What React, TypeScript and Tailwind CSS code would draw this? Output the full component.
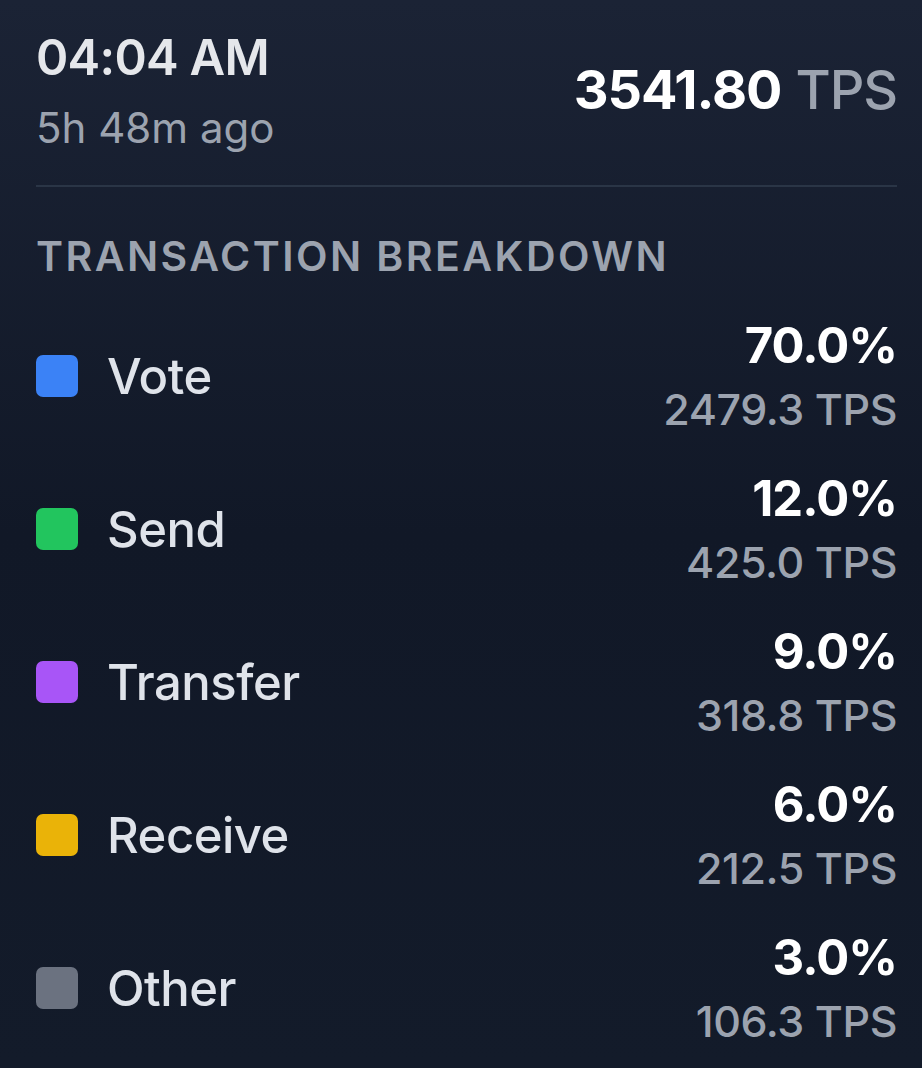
import React from "react";

const rows = [
  { label: "Vote", color: "bg-[#3b82f6]", pct: "70.0%", tps: "2479.3 TPS" },
  { label: "Send", color: "bg-[#22c55e]", pct: "12.0%", tps: "425.0 TPS" },
  { label: "Transfer", color: "bg-[#a855f7]", pct: "9.0%", tps: "318.8 TPS" },
  { label: "Receive", color: "bg-[#eab308]", pct: "6.0%", tps: "212.5 TPS" },
  { label: "Other", color: "bg-[#6b7280]", pct: "3.0%", tps: "106.3 TPS" },
];

export default function App() {
  return (
    <div
      className="h-[1068px] w-[922px] overflow-hidden bg-gradient-to-b from-[#1b2335] via-[#111827] to-[#131b2a] pl-[36px] pr-[25px] text-[#e5e7eb]"
      style={{ fontFamily: "Inter, 'Noto Sans', sans-serif" }}
    >
      <div className="flex items-center justify-between border-b-2 border-[#2a3546] pt-[33px] pb-[36px]">
        <div>
          <div className="text-[49px] font-semibold leading-none tracking-[-0.015em] text-[#e5e7eb]">04:04 AM</div>
          <div className="mt-[25px] text-[42px] leading-none text-[#9ca3af]">5h 48m ago</div>
        </div>
        <div className="mt-[-2px] text-[54px] leading-none tracking-[-0.02em]">
          <span className="font-bold text-white">3541.80</span>{" "}
          <span className="font-medium text-[#9ca3af]">TPS</span>
        </div>
      </div>

      <div className="mt-[49px] text-[41px] font-semibold uppercase leading-none tracking-[0.06em] text-[#9ca3af]">
        Transaction Breakdown
      </div>

      <div className="mt-[44px] flex flex-col gap-[43px]">
        {rows.map((r) => (
          <div key={r.label} className="flex items-center justify-between">
            <div className="flex items-center gap-[29px]">
              <div className={`h-[42px] w-[42px] rounded-[7px] ${r.color}`} />
              <div className="text-[49px] font-medium leading-none tracking-[-0.01em] text-[#dfe3ea]">{r.label}</div>
            </div>
            <div className="flex flex-col items-end">
              <div className="text-[49px] font-bold leading-none tracking-[-0.02em] text-white">{r.pct}</div>
              <div className="mt-[18px] text-[43px] font-medium leading-none tracking-[-0.01em] text-[#9ca3af]">{r.tps}</div>
            </div>
          </div>
        ))}
      </div>
    </div>
  );
}
